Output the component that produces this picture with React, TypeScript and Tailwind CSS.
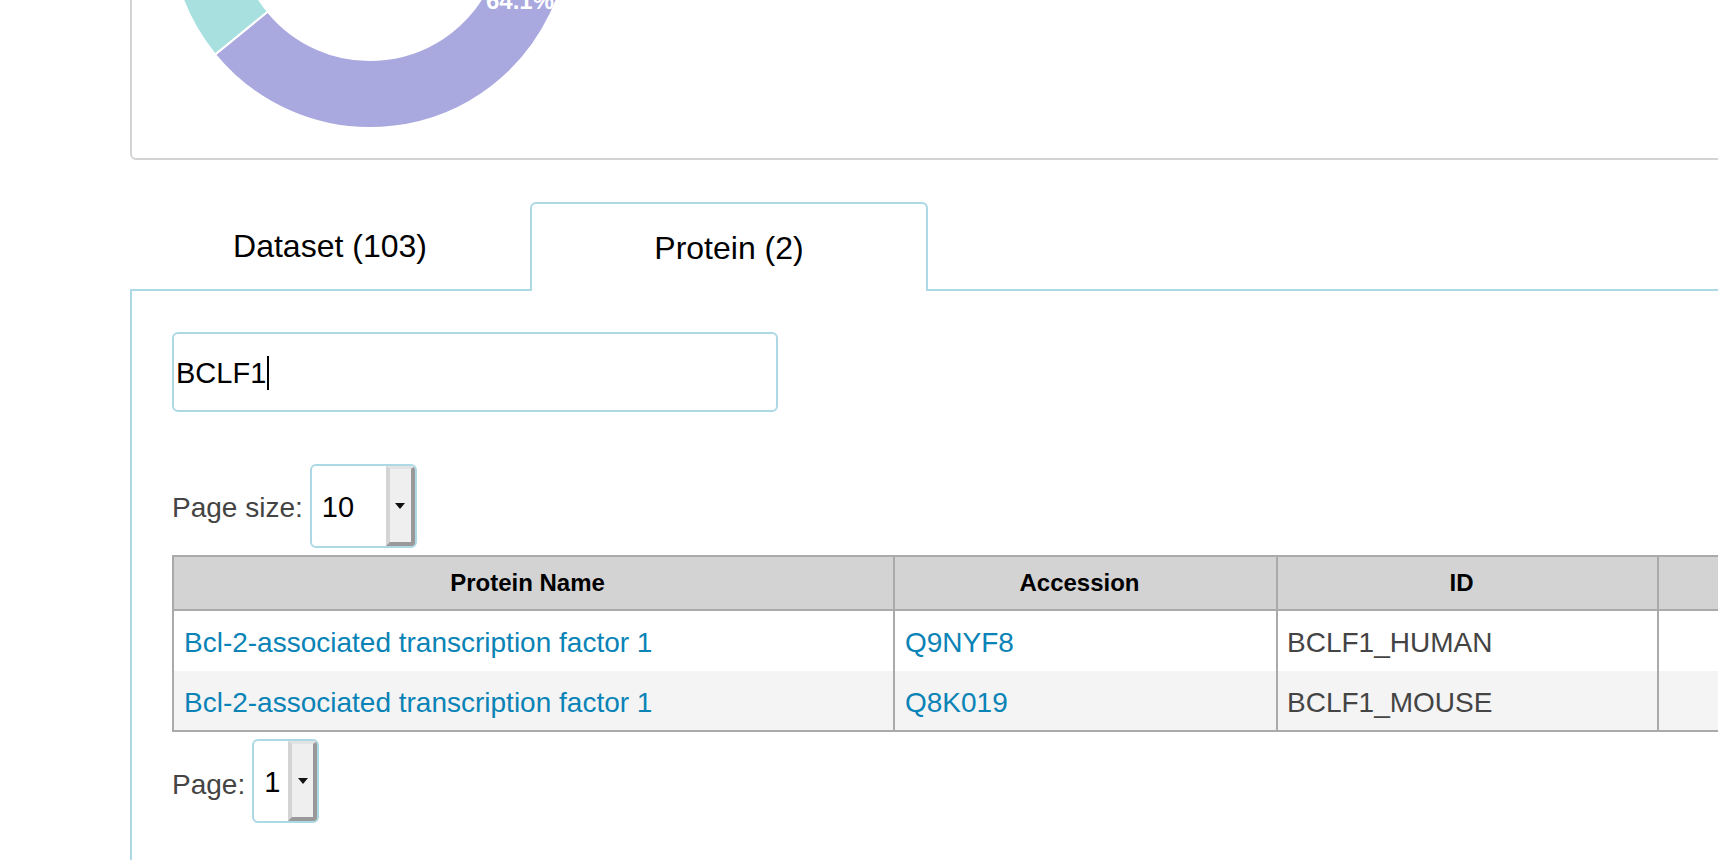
import React from 'react';

// donut helpers: angles in degrees, clockwise from 12 o'clock
const pt = (deg: number, rad: number) => {
  const a = (deg * Math.PI) / 180;
  return [rad * Math.sin(a), -rad * Math.cos(a)];
};

const arcPath = (start: number, end: number, R: number, r: number) => {
  const [x1, y1] = pt(start, R);
  const [x2, y2] = pt(end, R);
  const [x3, y3] = pt(end, r);
  const [x4, y4] = pt(start, r);
  const large = end - start > 180 ? 1 : 0;
  return `M${x1} ${y1} A${R} ${R} 0 ${large} 1 ${x2} ${y2} L${x3} ${y3} A${r} ${r} 0 ${large} 0 ${x4} ${y4} Z`;
};

const slices = [
  { from: 0, to: 230.76, color: '#a9a8df' },
  { from: 230.76, to: 300, color: '#a8e0df' },
  { from: 300, to: 360, color: '#f4b6c2' },
];

function ChartCard() {
  return (
    <div className="-mt-[280px] h-[440px] border-2 border-[#d3d3d3] rounded-md pl-[32px]">
      <svg width={412} height={412} viewBox="-206 -206 412 412">
        {slices.map((s, i) => (
          <path key={i} d={arcPath(s.from, s.to, 200, 132)} fill={s.color} stroke="#fff" strokeWidth={2} />
        ))}
        <text
          x={150}
          y={81}
          textAnchor="middle"
          fill="#fff"
          fontSize={24}
          fontWeight="bold"
          fontFamily="Liberation Sans, Arial, sans-serif"
        >
          64.1%
        </text>
      </svg>
    </div>
  );
}

function Tabs() {
  return (
    <div className="mt-[42px] flex h-[89px]">
      <div className="w-[400px] flex items-center justify-center border-b-2 border-[#add8e6] text-[32px] leading-none text-black">
        Dataset (103)
      </div>
      <div className="w-[398px] flex items-center justify-center border-2 border-b-0 border-[#add8e6] rounded-t-md text-[32px] leading-none text-black">
        Protein (2)
      </div>
      <div className="flex-1 border-b-2 border-[#add8e6]" />
    </div>
  );
}

const Select = ({ value, width }: { value: string; width: number }) => (
  <div
    className="flex h-[84px] border-2 border-[#add8e6] rounded-md overflow-hidden bg-white"
    style={{ width }}
  >
    <div className="flex-1 flex items-center pl-[10px] pt-[2px] text-[29px] leading-none text-black">{value}</div>
    <div className="w-[29px] h-full bg-[#efefef] border-l-4 border-l-[#d4d4d4] border-t-[3px] border-t-[#e3e3e3] border-r-4 border-r-[#999] border-b-4 border-b-[#999] flex items-center justify-center">
      <svg width="10" height="6" viewBox="0 0 10 6">
        <path d="M0 0 L10 0 L5 6 Z" fill="#111" />
      </svg>
    </div>
  </div>
);

const rows = [
  { name: 'Bcl-2-associated transcription factor 1', acc: 'Q9NYF8', id: 'BCLF1_HUMAN' },
  { name: 'Bcl-2-associated transcription factor 1', acc: 'Q8K019', id: 'BCLF1_MOUSE' },
];

function ProteinTable() {
  return (
    <div className="mt-[7px] w-[1560px] border-2 border-[#aaa]">
      <div className="flex h-[54px] bg-[#d3d3d3] border-b-2 border-[#aaa] text-[24px] font-bold text-black">
        <div className="w-[721px] border-r-2 border-[#aaa] flex items-center justify-center pl-2 pr-[20px]">Protein Name</div>
        <div className="w-[383px] border-r-2 border-[#aaa] flex items-center justify-center pl-2 pr-[20px]">Accession</div>
        <div className="w-[381px] border-r-2 border-[#aaa] flex items-center justify-center pl-2 pr-[20px]">ID</div>
        <div className="flex-1" />
      </div>
      {rows.map((r, i) => (
        <div key={r.acc} className={`flex text-[28px] ${i === 0 ? 'h-[60px] bg-white' : 'h-[59px] bg-[#f4f4f4]'}`}>
          <div className="w-[721px] border-r-2 border-[#aaa] flex items-center pl-[10px] pt-[4px] text-[#0a83b6]">{r.name}</div>
          <div className="w-[383px] border-r-2 border-[#aaa] flex items-center pl-[10px] pt-[4px] text-[#0a83b6]">{r.acc}</div>
          <div className="w-[381px] border-r-2 border-[#aaa] flex items-center pl-[9px] pt-[4px] text-[#444]">{r.id}</div>
          <div className="flex-1" />
        </div>
      ))}
    </div>
  );
}

export default function App() {
  return (
    <div className="w-[1718px] h-[860px] overflow-hidden bg-white font-['Liberation_Sans',Arial,sans-serif]">
      <div className="ml-[130px] w-[1700px]">
        <ChartCard />
        <Tabs />
        <div className="border-l-2 border-[#add8e6] pl-[40px] pt-[41px] h-[600px]">
          <div className="w-[606px] h-[80px] border-2 border-[#add8e6] rounded-md flex items-center pl-[2px] pt-[2px] text-[29px] leading-none text-black">
            BCLF1
            <span className="ml-[1px] inline-block w-[2px] h-[34px] bg-black" />
          </div>
          <div className="mt-[52px] flex items-center gap-[7px] text-[28px] text-[#444]">
            <span className="pt-[4px]">Page size:</span>
            <Select value="10" width={107} />
          </div>
          <ProteinTable />
          <div className="mt-[7px] flex items-center gap-[7px] text-[28px] text-[#444]">
            <span className="pt-[8px]">Page:</span>
            <Select value="1" width={67} />
          </div>
        </div>
      </div>
    </div>
  );
}
